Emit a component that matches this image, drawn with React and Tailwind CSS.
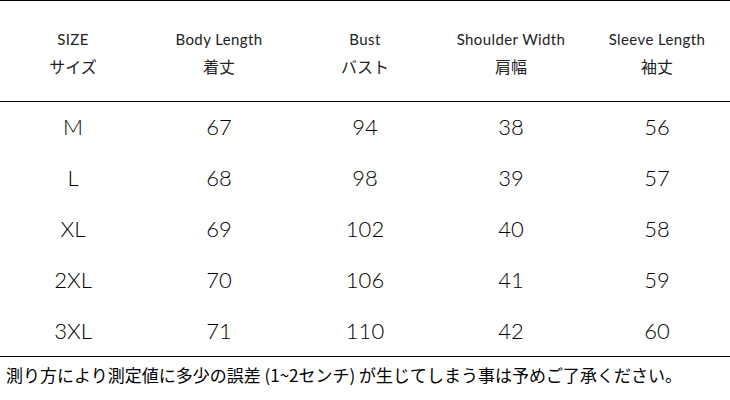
const columns = [
  { en: 'SIZE', ja: 'サイズ' },
  { en: 'Body Length', ja: '着丈' },
  { en: 'Bust', ja: 'バスト' },
  { en: 'Shoulder Width', ja: '肩幅' },
  { en: 'Sleeve Length', ja: '袖丈' },
];

const rows = [
  ['M', '67', '94', '38', '56'],
  ['L', '68', '98', '39', '57'],
  ['XL', '69', '102', '40', '58'],
  ['2XL', '70', '106', '41', '59'],
  ['3XL', '71', '110', '42', '60'],
];

const latin = { fontFamily: 'Lato, "Noto Sans CJK JP", sans-serif' };
const jp = { fontFamily: '"Noto Sans CJK JP", sans-serif' };

export default function App() {
  return (
    <div className="w-[730px] h-[400px] bg-white text-black overflow-hidden flex flex-col">
      {/* 見出し */}
      <div className="h-[102px] border-t-[1.5px] border-b-[1.5px] border-black grid grid-cols-5 items-center">
        {columns.map((c) => (
          <div key={c.en} className="flex flex-col items-center gap-[7px] pt-[2px]">
            <span className="text-[15px] leading-[20px] tracking-[0.4px] text-[#222]" style={latin}>{c.en}</span>
            <span className="text-[16px] leading-[20px] text-[#222]" style={jp}>{c.ja}</span>
          </div>
        ))}
      </div>

      {/* サイズ表 */}
      <div className="h-[255px] flex flex-col border-b-[1.5px] border-black">
        {rows.map((r) => (
          <div key={r[0]} className="flex-1 grid grid-cols-5 items-center">
            {r.map((v, i) => (
              <span key={i} className="text-center text-[22px] leading-none font-light" style={latin}>{v}</span>
            ))}
          </div>
        ))}
      </div>

      <p className="pl-[6px] pt-[7px] text-[17px] leading-[22px]" style={jp}>
        測り方により測定値に多少の誤差 (1~2センチ) が生じてしまう事は予めご了承ください。
      </p>
    </div>
  );
}
